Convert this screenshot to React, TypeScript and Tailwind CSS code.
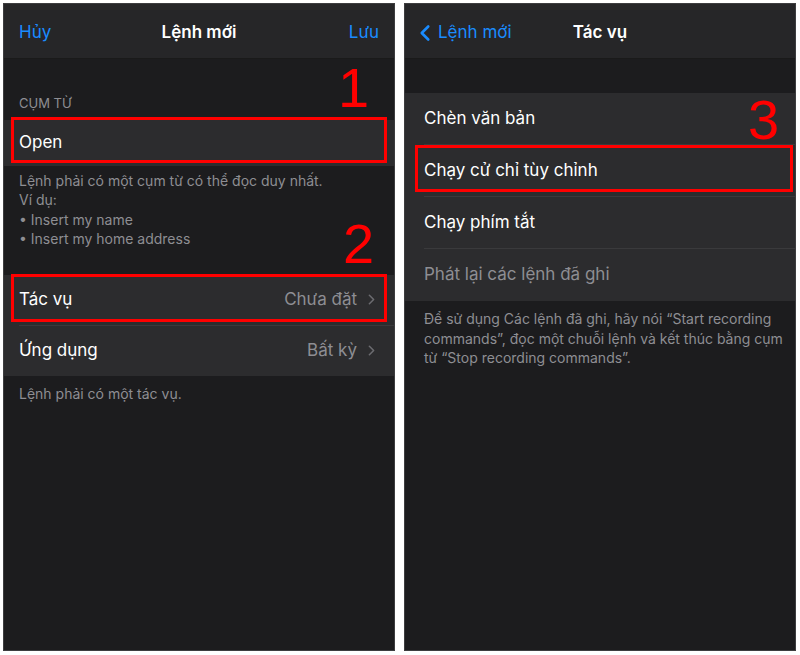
import { ChevronRight, ChevronLeft } from 'lucide-react';

const font = { fontFamily: 'Inter, "Noto Sans", sans-serif' };

function Row({ label, value, muted, last, pad = 'pl-[15px]', h = 'h-[52px]' }: { label: string; value?: string; muted?: boolean; last?: boolean; pad?: string; h?: string }) {
  return (
    <div className={`bg-[#2c2c2e] ${pad}`}>
      <div className={`flex ${h} items-center pr-[14px] ${last ? '' : 'border-b border-[#3a3a3c]'}`}>
        <span className={`flex-1 text-[17px] ${muted ? 'text-[#8e8e93]' : 'text-white'}`}>{label}</span>
        {value && (
          <span className="flex items-center gap-[6px] text-[17px] text-[#8e8e93]">
            {value}
            <ChevronRight className="h-[17px] w-[17px] text-[#6b6b70]" strokeWidth={2.2} />
          </span>
        )}
      </div>
    </div>
  );
}

function Mark({ n, className }: { n: string; className: string }) {
  return (
    <span
      className={`absolute text-[56px] leading-none text-[#ff0000] ${className}`}
      style={{ fontFamily: '"Liberation Sans", sans-serif' }}
    >
      {n}
    </span>
  );
}

export default function App() {
  return (
    <div className="flex h-[655px] w-[800px] gap-[9px] bg-white pl-[3px] pt-[3px]" style={font}>
      {/* left screen */}
      <div className="relative flex h-[648px] w-[392px] flex-col border border-[#3d3d3f] bg-[#1c1c1e]">
        <div className="flex h-[55px] items-center justify-between border-b border-[#1a1a1a] bg-[#262628] px-[15px] pt-[4px]">
          <span className="w-[60px] text-[17px] text-[#1a8cff]">Hủy</span>
          <span className="text-[17px] font-semibold text-white">Lệnh mới</span>
          <span className="w-[60px] text-right text-[17px] text-[#1a8cff]">Lưu</span>
        </div>
        <div className="px-[15px] pb-[6px] pt-[35px] text-[13px] uppercase text-[#8e8e93]">Cụm từ</div>
        <div className="bg-[#2c2c2e] pl-[15px]">
          <div className="flex h-[46px] items-center text-[17px] text-white">Open</div>
        </div>
        <div className="px-[15px] pt-[5px] text-[14px] leading-[19.5px] text-[#8e8e93]">
          <p>Lệnh phải có một cụm từ có thể đọc duy nhất.</p>
          <p>Ví dụ:</p>
          <p>• Insert my name</p>
          <p>• Insert my home address</p>
        </div>
        <div className="mt-[26px]">
          <Row label="Tác vụ" value="Chưa đặt" h="h-[51px]" />
          <Row label="Ứng dụng" value="Bất kỳ" h="h-[50px]" last />
        </div>
        <div className="px-[15px] pt-[8px] text-[14px] leading-[19.5px] text-[#8e8e93]">Lệnh phải có một tác vụ.</div>

        <div className="absolute left-[7px] top-[113px] h-[46px] w-[376px] border-[3px] border-[#ff0000]" />
        <div className="absolute left-[7px] top-[270px] h-[48px] w-[376px] border-[3px] border-[#ff0000]" />
        <Mark n="1" className="left-[334px] top-[56px]" />
        <Mark n="2" className="left-[339px] top-[212px]" />
      </div>

      {/* right screen */}
      <div className="relative flex h-[648px] w-[392px] flex-col border border-[#3d3d3f] bg-[#1c1c1e]">
        <div className="relative flex h-[55px] items-center justify-center border-b border-[#1a1a1a] bg-[#262628] pt-[4px]">
          <span className="absolute left-[7px] top-[16px] flex items-center text-[17px] text-[#1a8cff]">
            <ChevronLeft className="h-[26px] w-[26px]" strokeWidth={2.4} />
            Lệnh mới
          </span>
          <span className="text-[17px] font-semibold text-white">Tác vụ</span>
        </div>
        <div className="mt-[34px]">
          <Row label="Chèn văn bản" pad="pl-[19px]" />
          <Row label="Chạy cử chỉ tùy chỉnh" pad="pl-[19px]" />
          <Row label="Chạy phím tắt" pad="pl-[19px]" />
          <Row label="Phát lại các lệnh đã ghi" pad="pl-[19px]" muted last />
        </div>
        <div className="pl-[19px] pr-[6px] pt-[8px] text-[14px] leading-[19.5px] text-[#8e8e93]">
          Để sử dụng Các lệnh đã ghi, hãy nói “Start recording commands”, đọc một chuỗi lệnh và kết thúc bằng cụm từ “Stop recording commands”.
        </div>

        <div className="absolute left-[10px] top-[141px] h-[47px] w-[378px] border-[3px] border-[#ff0000]" />
        <Mark n="3" className="left-[343px] top-[88px]" />
      </div>
    </div>
  );
}
